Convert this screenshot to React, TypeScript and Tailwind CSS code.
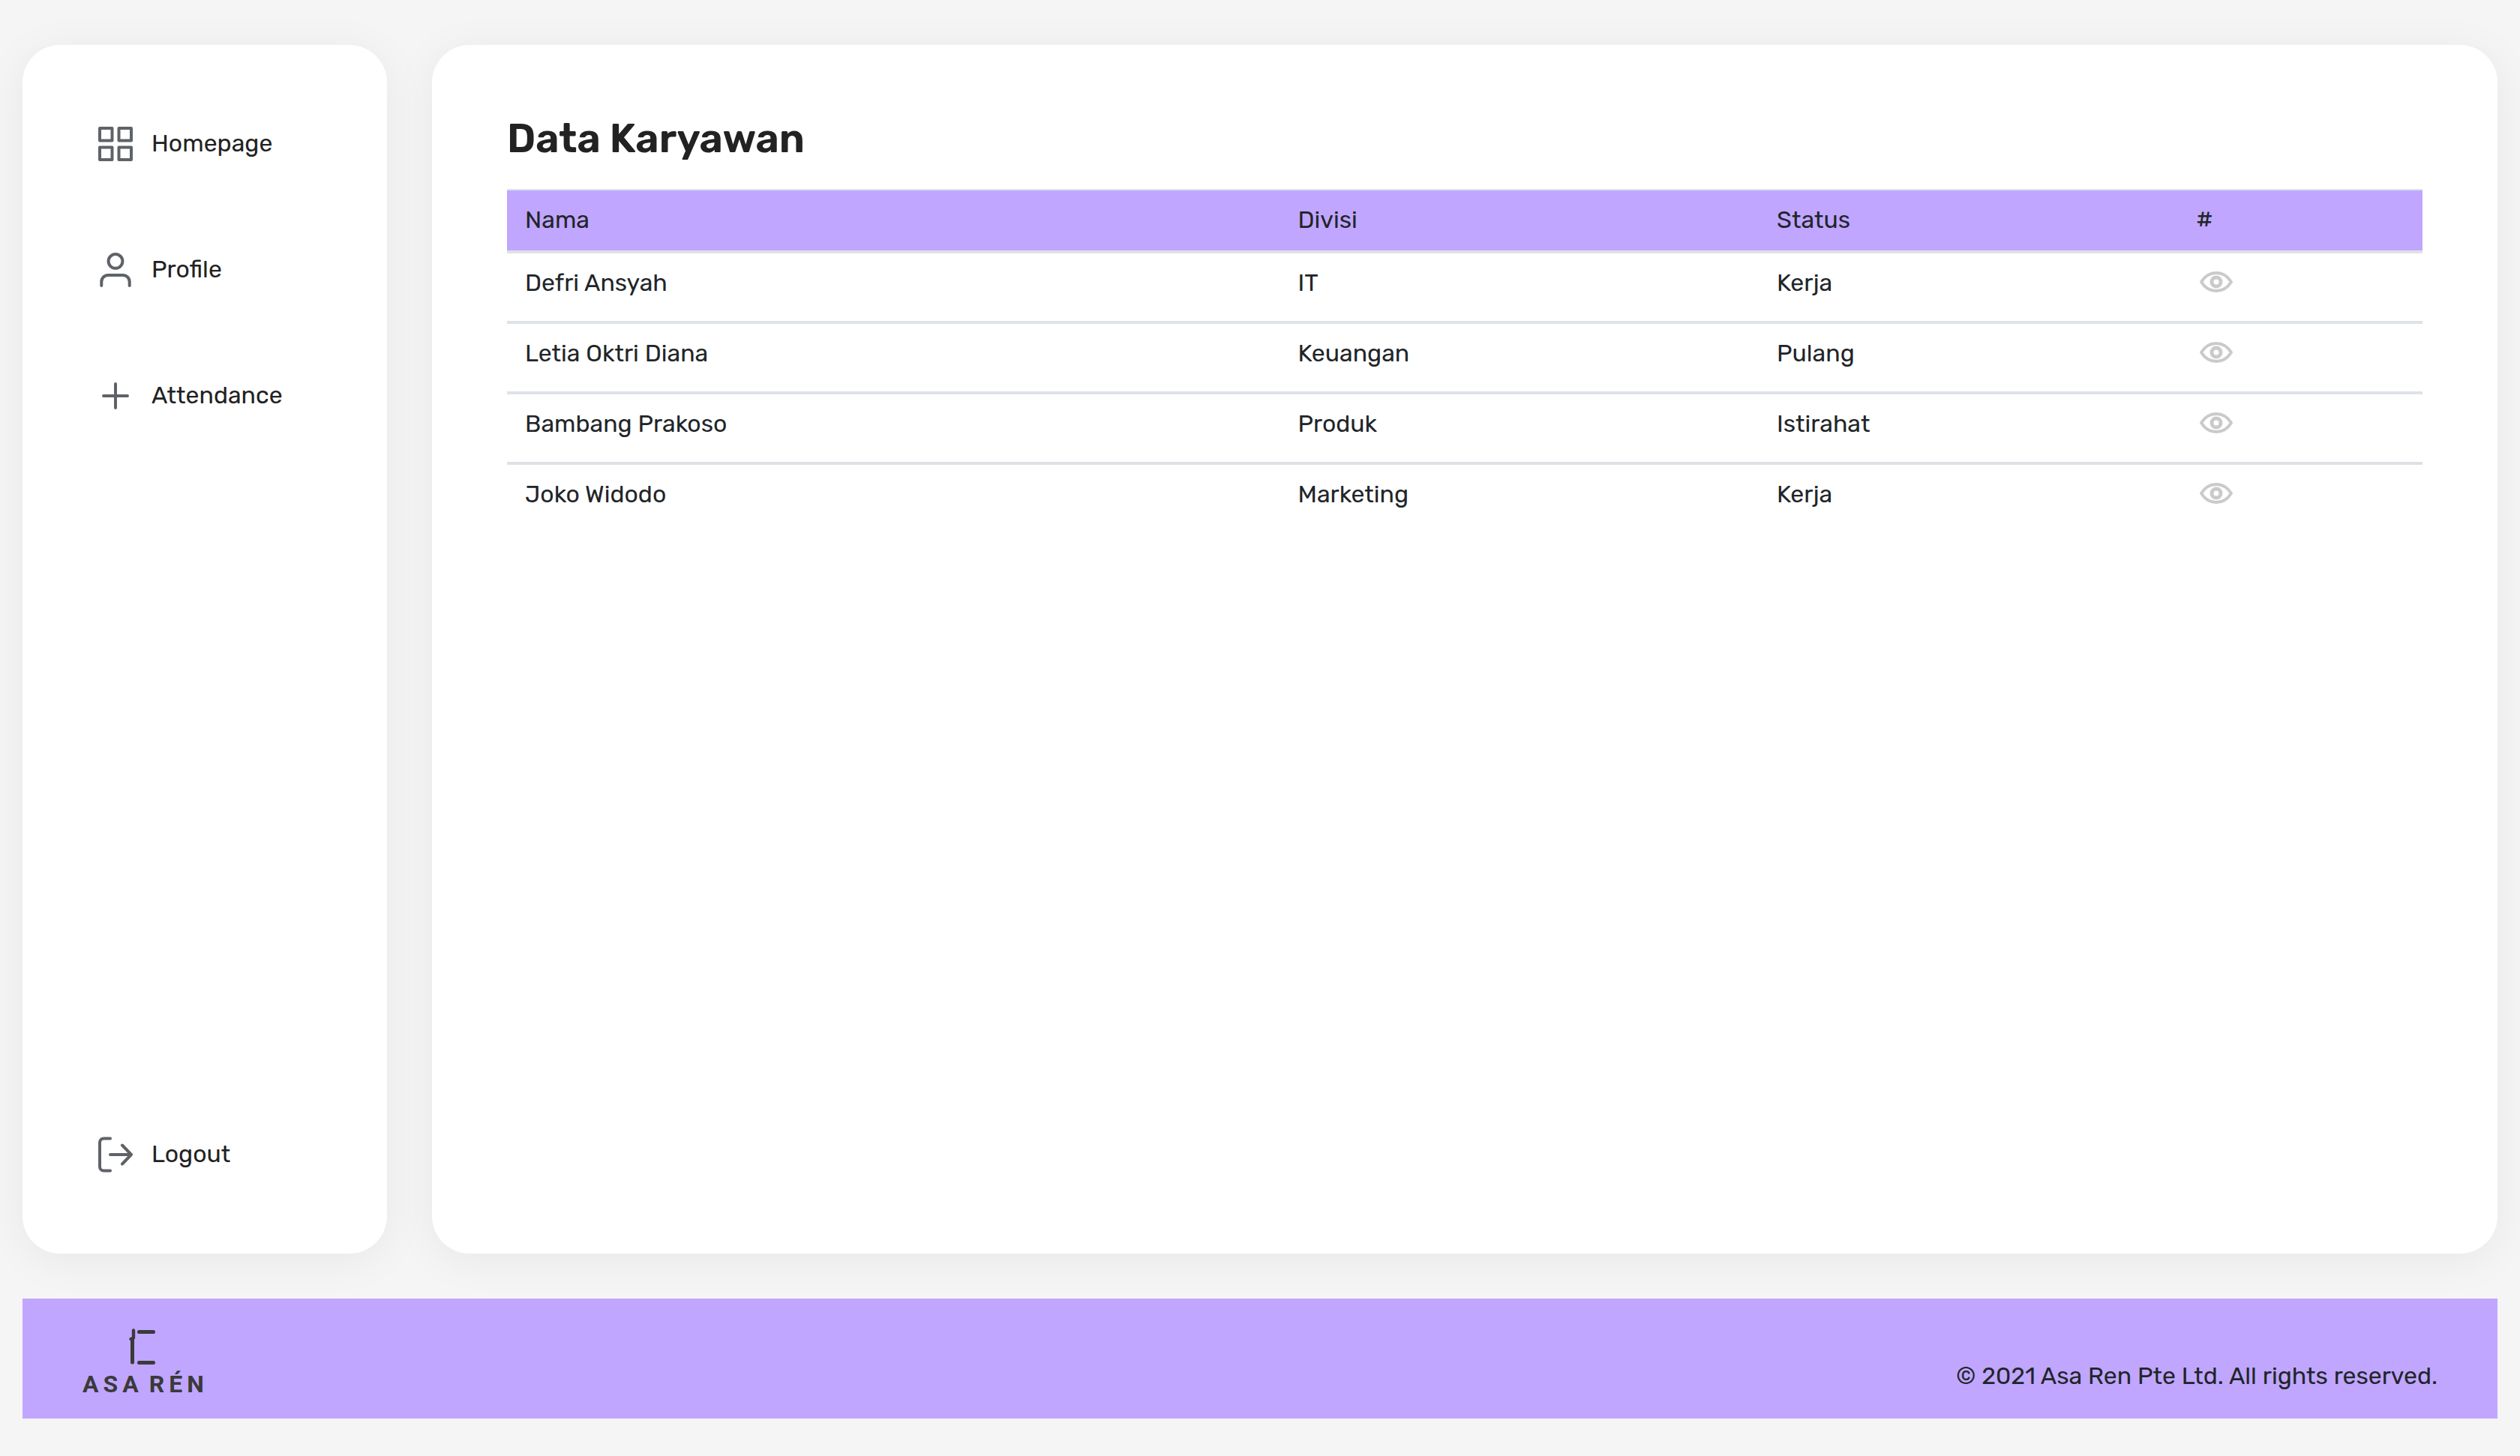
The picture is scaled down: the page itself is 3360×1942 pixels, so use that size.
import type { ReactNode } from "react";

function Icon({ children }: { children: ReactNode }) {
  return (
    <svg
      viewBox="0 0 48 48"
      className="size-12 shrink-0"
      fill="none"
      stroke="#5f6368"
      strokeWidth="4"
      strokeLinecap="round"
      strokeLinejoin="round"
      aria-hidden="true"
    >
      {children}
    </svg>
  );
}

const GridIcon = () => (
  <Icon>
    <rect x="3" y="3" width="16.5" height="16.5" />
    <rect x="28.5" y="3" width="16.5" height="16.5" />
    <rect x="3" y="28.5" width="16.5" height="16.5" />
    <rect x="28.5" y="28.5" width="16.5" height="16.5" />
  </Icon>
);

const UserIcon = () => (
  <Icon>
    <circle cx="24" cy="12.4" r="9.4" />
    <path d="M5.3 45v-5c0-5.5 4-9 9-9h19.4c5 0 9 3.5 9 9v5" />
  </Icon>
);

const PlusIcon = () => (
  <Icon>
    <path d="M24 8v32M8 24h32" />
  </Icon>
);

const LogoutIcon = () => (
  <Icon>
    <path d="M17 2.5H8.5C5 2.5 3 5 3 8v32c0 3 2 5.5 5.5 5.5H17M17 24h28M33 11.5L45 24L33 36.5" />
  </Icon>
);

const EyeIcon = () => (
  <svg viewBox="0 0 56 44" className="h-11 w-14" fill="none" stroke="#cacaca" strokeWidth="4" strokeLinejoin="round" aria-hidden="true">
    <path d="M7 22C12 14 19 10 27 10s15 4 20 12c-5 8-12 12-20 12S12 30 7 22z" />
    <circle cx="27" cy="22" r="6" strokeWidth="5" />
  </svg>
);

const Logo = () => (
  <div className="flex flex-col items-center gap-2.5 text-[#3a3a3a]">
    <svg viewBox="0 0 46 50" className="h-[50px] w-[46px]" fill="none" stroke="currentColor" strokeLinecap="round" aria-hidden="true">
      <path d="M5.5 17v30" strokeWidth="5" />
      <path d="M7 4.5v10L3.5 16" strokeWidth="4.4" strokeLinejoin="round" />
      <path d="M14.5 6.5H33.5M14.5 47.5H33.5" strokeWidth="5" />
    </svg>
    <span className="flex gap-2 font-[Roboto] text-[32px] leading-8 font-bold tracking-[6px]">
      <span>ASA</span>
      <span>RÉN</span>
    </span>
  </div>
);

const menu = [
  { label: "Homepage", icon: <GridIcon /> },
  { label: "Profile", icon: <UserIcon /> },
  { label: "Attendance", icon: <PlusIcon /> },
];

const employees = [
  { name: "Defri Ansyah", division: "IT", status: "Kerja" },
  { name: "Letia Oktri Diana", division: "Keuangan", status: "Pulang" },
  { name: "Bambang Prakoso", division: "Produk", status: "Istirahat" },
  { name: "Joko Widodo", division: "Marketing", status: "Kerja" },
];

function MenuLink({ label, icon }: { label: string; icon: ReactNode }) {
  return (
    <a href="#" className="flex items-center gap-6">
      {icon}
      <span className="pb-0.5">{label}</span>
    </a>
  );
}

export default function App() {
  return (
    <div className="flex min-h-screen flex-col gap-[60px] bg-[#f5f5f5] px-[30px] pt-[60px] pb-[50px] font-[Rubik,Inter,sans-serif] text-[32px] leading-[46px] text-[#212529]">
      <div className="flex grow gap-[60px]">
        <aside className="flex w-[486px] shrink-0 flex-col justify-between rounded-[50px] bg-white px-[100px] py-[108px] text-[#222222] shadow-[0_8px_60px_rgba(0,0,0,0.06)]">
          <nav className="flex flex-col gap-[120px]">
            {menu.map((item) => (
              <MenuLink key={item.label} {...item} />
            ))}
          </nav>
          <MenuLink label="Logout" icon={<LogoutIcon />} />
        </aside>

        <main className="min-w-0 grow rounded-[50px] bg-white px-[100px] py-[90px] shadow-[0_8px_60px_rgba(0,0,0,0.06)]">
          <h1 className="mb-8 text-[54px] leading-[70px] font-semibold text-[#222222]">Data Karyawan</h1>
          <table className="w-full table-fixed border-separate border-spacing-0 text-left">
            <thead>
              <tr className="bg-[#c0a6ff]">
                <th className="w-[40.35%] border-t-2 border-b-4 border-[#dee2e6] px-6 pt-4 pb-[18px] font-normal">Nama</th>
                <th className="w-[25%] border-t-2 border-b-4 border-[#dee2e6] px-6 pt-4 pb-[18px] font-normal">Divisi</th>
                <th className="w-[21.9%] border-t-2 border-b-4 border-[#dee2e6] px-6 pt-4 pb-[18px] font-normal">Status</th>
                <th className="border-t-2 border-b-4 border-[#dee2e6] px-6 pt-4 pb-[18px] font-normal">#</th>
              </tr>
            </thead>
            <tbody className="[&>tr:not(:last-child)>td]:border-b-4 [&>tr:not(:last-child)>td]:border-[#dee2e6]">
              {employees.map((e) => (
                <tr key={e.name} className="align-top">
                  <td className="px-6 pt-4 pb-7">{e.name}</td>
                  <td className="px-6 pt-4 pb-7">{e.division}</td>
                  <td className="px-6 pt-4 pb-7">{e.status}</td>
                  <td className="px-6 pt-4 pb-7">
                    <button type="button" aria-label={`Lihat ${e.name}`} className="block">
                      <EyeIcon />
                    </button>
                  </td>
                </tr>
              ))}
            </tbody>
          </table>
        </main>
      </div>

      <footer className="flex h-40 items-end justify-between bg-[#c0a6ff] px-20 pb-[30px]">
        <Logo />
        <p className="pb-1">© 2021 Asa Ren Pte Ltd. All rights reserved.</p>
      </footer>
    </div>
  );
}
